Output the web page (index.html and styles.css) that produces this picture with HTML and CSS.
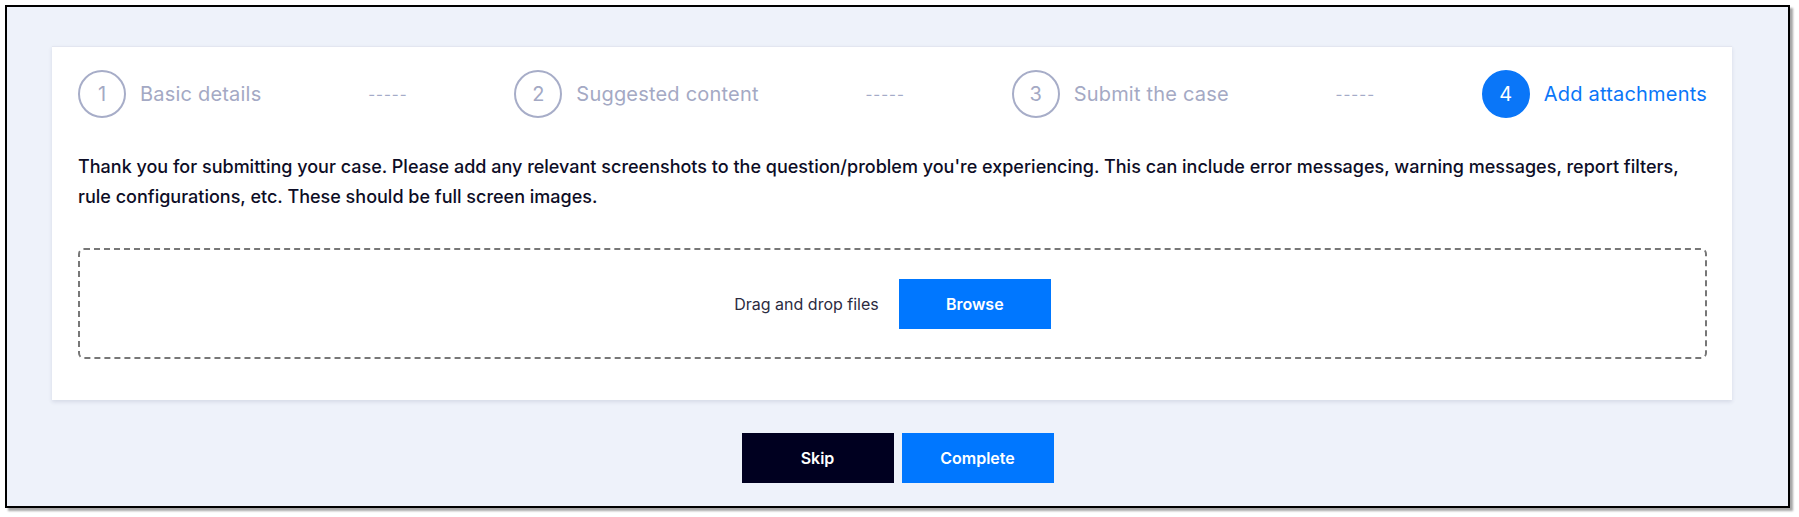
FILE: index.html
```html
<!DOCTYPE html>
<html lang="en">
<head>
  <meta charset="UTF-8">
  <meta name="viewport" content="width=device-width, initial-scale=1.0">
  <title>Create a case - Add attachments</title>
  <link rel="stylesheet" href="styles.css">
</head>
<body>
  <div class="frame">
    <div class="card">
      <!-- Wizard steps -->
      <div class="steps">
        <div class="step">
          <span class="step-num">1</span>
          <span class="step-label">Basic details</span>
        </div>
        <span class="step-sep">-----</span>
        <div class="step">
          <span class="step-num">2</span>
          <span class="step-label">Suggested content</span>
        </div>
        <span class="step-sep">-----</span>
        <div class="step">
          <span class="step-num">3</span>
          <span class="step-label">Submit the case</span>
        </div>
        <span class="step-sep">-----</span>
        <div class="step active">
          <span class="step-num">4</span>
          <span class="step-label">Add attachments</span>
        </div>
      </div>

      <p class="intro">
        Thank you for submitting your case. Please add any relevant screenshots to the question/problem you're experiencing. This can include error messages, warning messages, report filters, rule configurations, etc. These should be full screen images.
      </p>

      <div class="dropzone">
        <span class="drop-text">Drag and drop files</span>
        <button class="btn btn-primary">Browse</button>
      </div>
    </div>

    <div class="actions">
      <button class="btn btn-dark">Skip</button>
      <button class="btn btn-primary">Complete</button>
    </div>
  </div>
</body>
</html>
```

FILE: styles.css
```css
body {
  margin: 0;
  padding: 5px;
  background-color: #fff;
  font-family: Inter, 'Open Sans', sans-serif;
  color: #0d0d26;
}

.frame {
  width: 1781px;
  border: 2px solid #000;
  background-color: #eef2fa;
  box-shadow: 3px 3px 2px rgba(0,0,0,0.35);
  padding: 39px 0 23px;
}

.card {
  width: 1680px;
  box-sizing: border-box;
  margin-left: 45px;
  background-color: #fff;
  border-top: 1px solid #e3e6f0;
  box-shadow: 0 2px 4px rgba(40,50,90,0.12);
  padding: 23px 25px 41px 26px;
}

.steps {
  display: flex;
  justify-content: space-between;
  align-items: center;
  height: 48px;
}

.step {
  display: flex;
  align-items: center;
  gap: 14px;
}

.step-num {
  display: flex;
  align-items: center;
  justify-content: center;
  width: 48px;
  height: 48px;
  box-sizing: border-box;
  border: 2px solid #a7adc8;
  border-radius: 50%;
  color: #a4a9c4;
  font-size: 20px;
}

.step-label {
  color: #a4a9c4;
  font-size: 20px;
  letter-spacing: 0.2px;
}

.step-sep {
  color: #a4abc8;
  font-size: 15px;
  letter-spacing: 1px;
}

.step.active .step-num {
  background-color: #0a76f8;
  border-color: #0a76f8;
  color: #fff;
}

.step.active .step-label {
  color: #0a76f8;
}

.intro {
  margin: 34px 0 36px;
  font-size: 18px;
  font-weight: 500;
  line-height: 30px;
  color: #0d0d26;
}

.dropzone {
  display: flex;
  align-items: center;
  justify-content: center;
  gap: 20px;
  height: 111px;
  box-sizing: border-box;
  border: 2px dashed #777;
  border-radius: 6px;
}

.drop-text {
  font-size: 16px;
  color: #2b2b3f;
}

.btn {
  width: 152px;
  height: 50px;
  border: none;
  font-family: inherit;
  font-size: 16px;
  font-weight: 600;
  color: #fff;
  cursor: pointer;
}

.btn-primary {
  background-color: #0077ff;
}

.btn-dark {
  background-color: #000020;
}

.actions {
  display: flex;
  justify-content: center;
  gap: 8px;
  margin-top: 33px;
}
```
